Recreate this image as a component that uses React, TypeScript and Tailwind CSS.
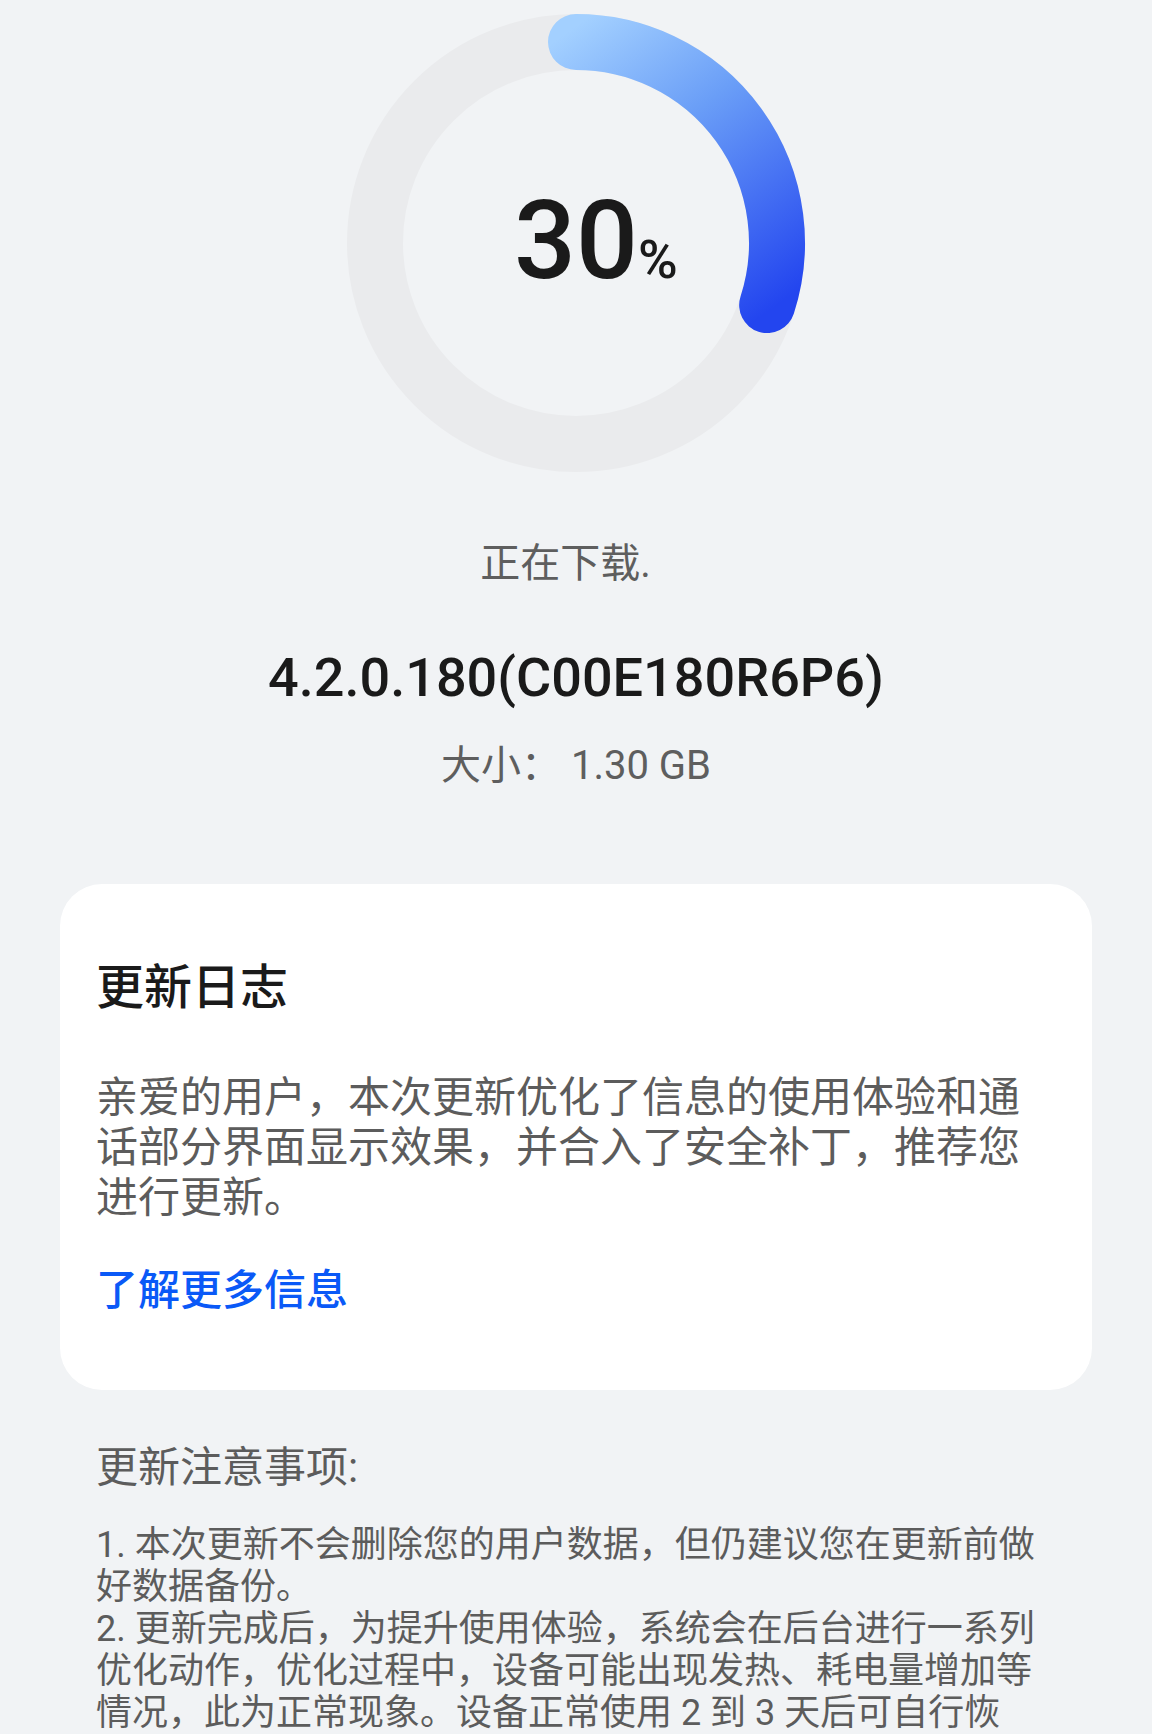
import React from 'react'

const font = "font-['Roboto','Noto_Sans_CJK_SC',sans-serif]"

const changelog = [
  '亲爱的用户，本次更新优化了信息的使用体验和通',
  '话部分界面显示效果，并合入了安全补丁，推荐您',
  '进行更新。',
]

const notes = [
  '1. 本次更新不会删除您的用户数据，但仍建议您在更新前做',
  '好数据备份。',
  '2. 更新完成后，为提升使用体验，系统会在后台进行一系列',
  '优化动作，优化过程中，设备可能出现发热、耗电量增加等',
  '情况，此为正常现象。设备正常使用 2 到 3 天后可自行恢',
]

function ProgressRing({ percent }: { percent: number }) {
  const r = 201
  const c = 230
  const angle = ((-90 + percent * 3.6) * Math.PI) / 180
  const ex = c + r * Math.cos(angle)
  const ey = c + r * Math.sin(angle)
  return (
    <div className="relative mt-[13px] h-[460px] w-[460px]">
      <svg className="absolute inset-0" width="460" height="460" viewBox="0 0 460 460">
        <defs>
          <linearGradient id="arc" gradientUnits="userSpaceOnUse" x1="220" y1="20" x2="420" y2="300">
            <stop offset="0" stopColor="#a3d0ff" />
            <stop offset="0.4" stopColor="#6a9ef7" />
            <stop offset="1" stopColor="#2345ef" />
          </linearGradient>
        </defs>
        <circle cx={c} cy={c} r={r} fill="none" stroke="#eaebed" strokeWidth="56" />
        <path
          d={`M ${c} ${c - r} A ${r} ${r} 0 0 1 ${ex} ${ey}`}
          fill="none"
          stroke="url(#arc)"
          strokeWidth="56"
          strokeLinecap="round"
        />
      </svg>
      <div className="relative flex h-full items-center justify-center">
        <div className="flex items-baseline font-medium text-[#1a1a1a]">
          <span className="invisible text-[54px]">%</span>
          <span className="text-[109px] leading-none">{percent}</span>
          <span className="text-[54px]">%</span>
        </div>
      </div>
    </div>
  )
}

export default function App() {
  return (
    <div className={`flex h-[1734px] w-full flex-col items-center overflow-hidden bg-[#f1f3f5] ${font}`}>
      <ProgressRing percent={30} />

      <div className="mt-[67px] text-[40px] leading-[48px] text-[#5e5e5e]">
        正在下载.<span className="invisible">..</span>
      </div>
      <div className="mt-[58px] text-[54px] font-medium leading-[64px] text-[#1a1a1a]">
        4.2.0.180(C00E180R6P6)
      </div>
      <div className="mt-[32px] text-[40px] leading-[48px] text-[#5e5e5e]">大小： 1.30 GB</div>

      {/* 更新日志 */}
      <div className="mt-[94px] w-[1032px] rounded-[42px] bg-white px-9 pb-[74px] pt-[80px]">
        <h2 className="text-[48px] font-medium leading-[48px] text-[#1a1a1a]">更新日志</h2>
        <div className="mt-[61px] text-[42px] leading-[50px] text-[#5c5c5c]">
          {changelog.map((line) => (
            <div key={line} className="whitespace-nowrap">
              {line}
            </div>
          ))}
        </div>
        <div className="mt-[43px] text-[42px] font-medium leading-[50px] text-[#0a59f7]">了解更多信息</div>
      </div>

      {/* 更新注意事项 */}
      <div className="w-full px-24">
        <div className="mt-[53px] text-[42px] leading-[50px] text-[#5c5c5c]">更新注意事项:</div>
        <div className="mt-[31px] text-[36px] leading-[42px] text-[#5c5c5c]">
          {notes.map((line) => (
            <div key={line} className="whitespace-nowrap">
              {line}
            </div>
          ))}
        </div>
      </div>
    </div>
  )
}
